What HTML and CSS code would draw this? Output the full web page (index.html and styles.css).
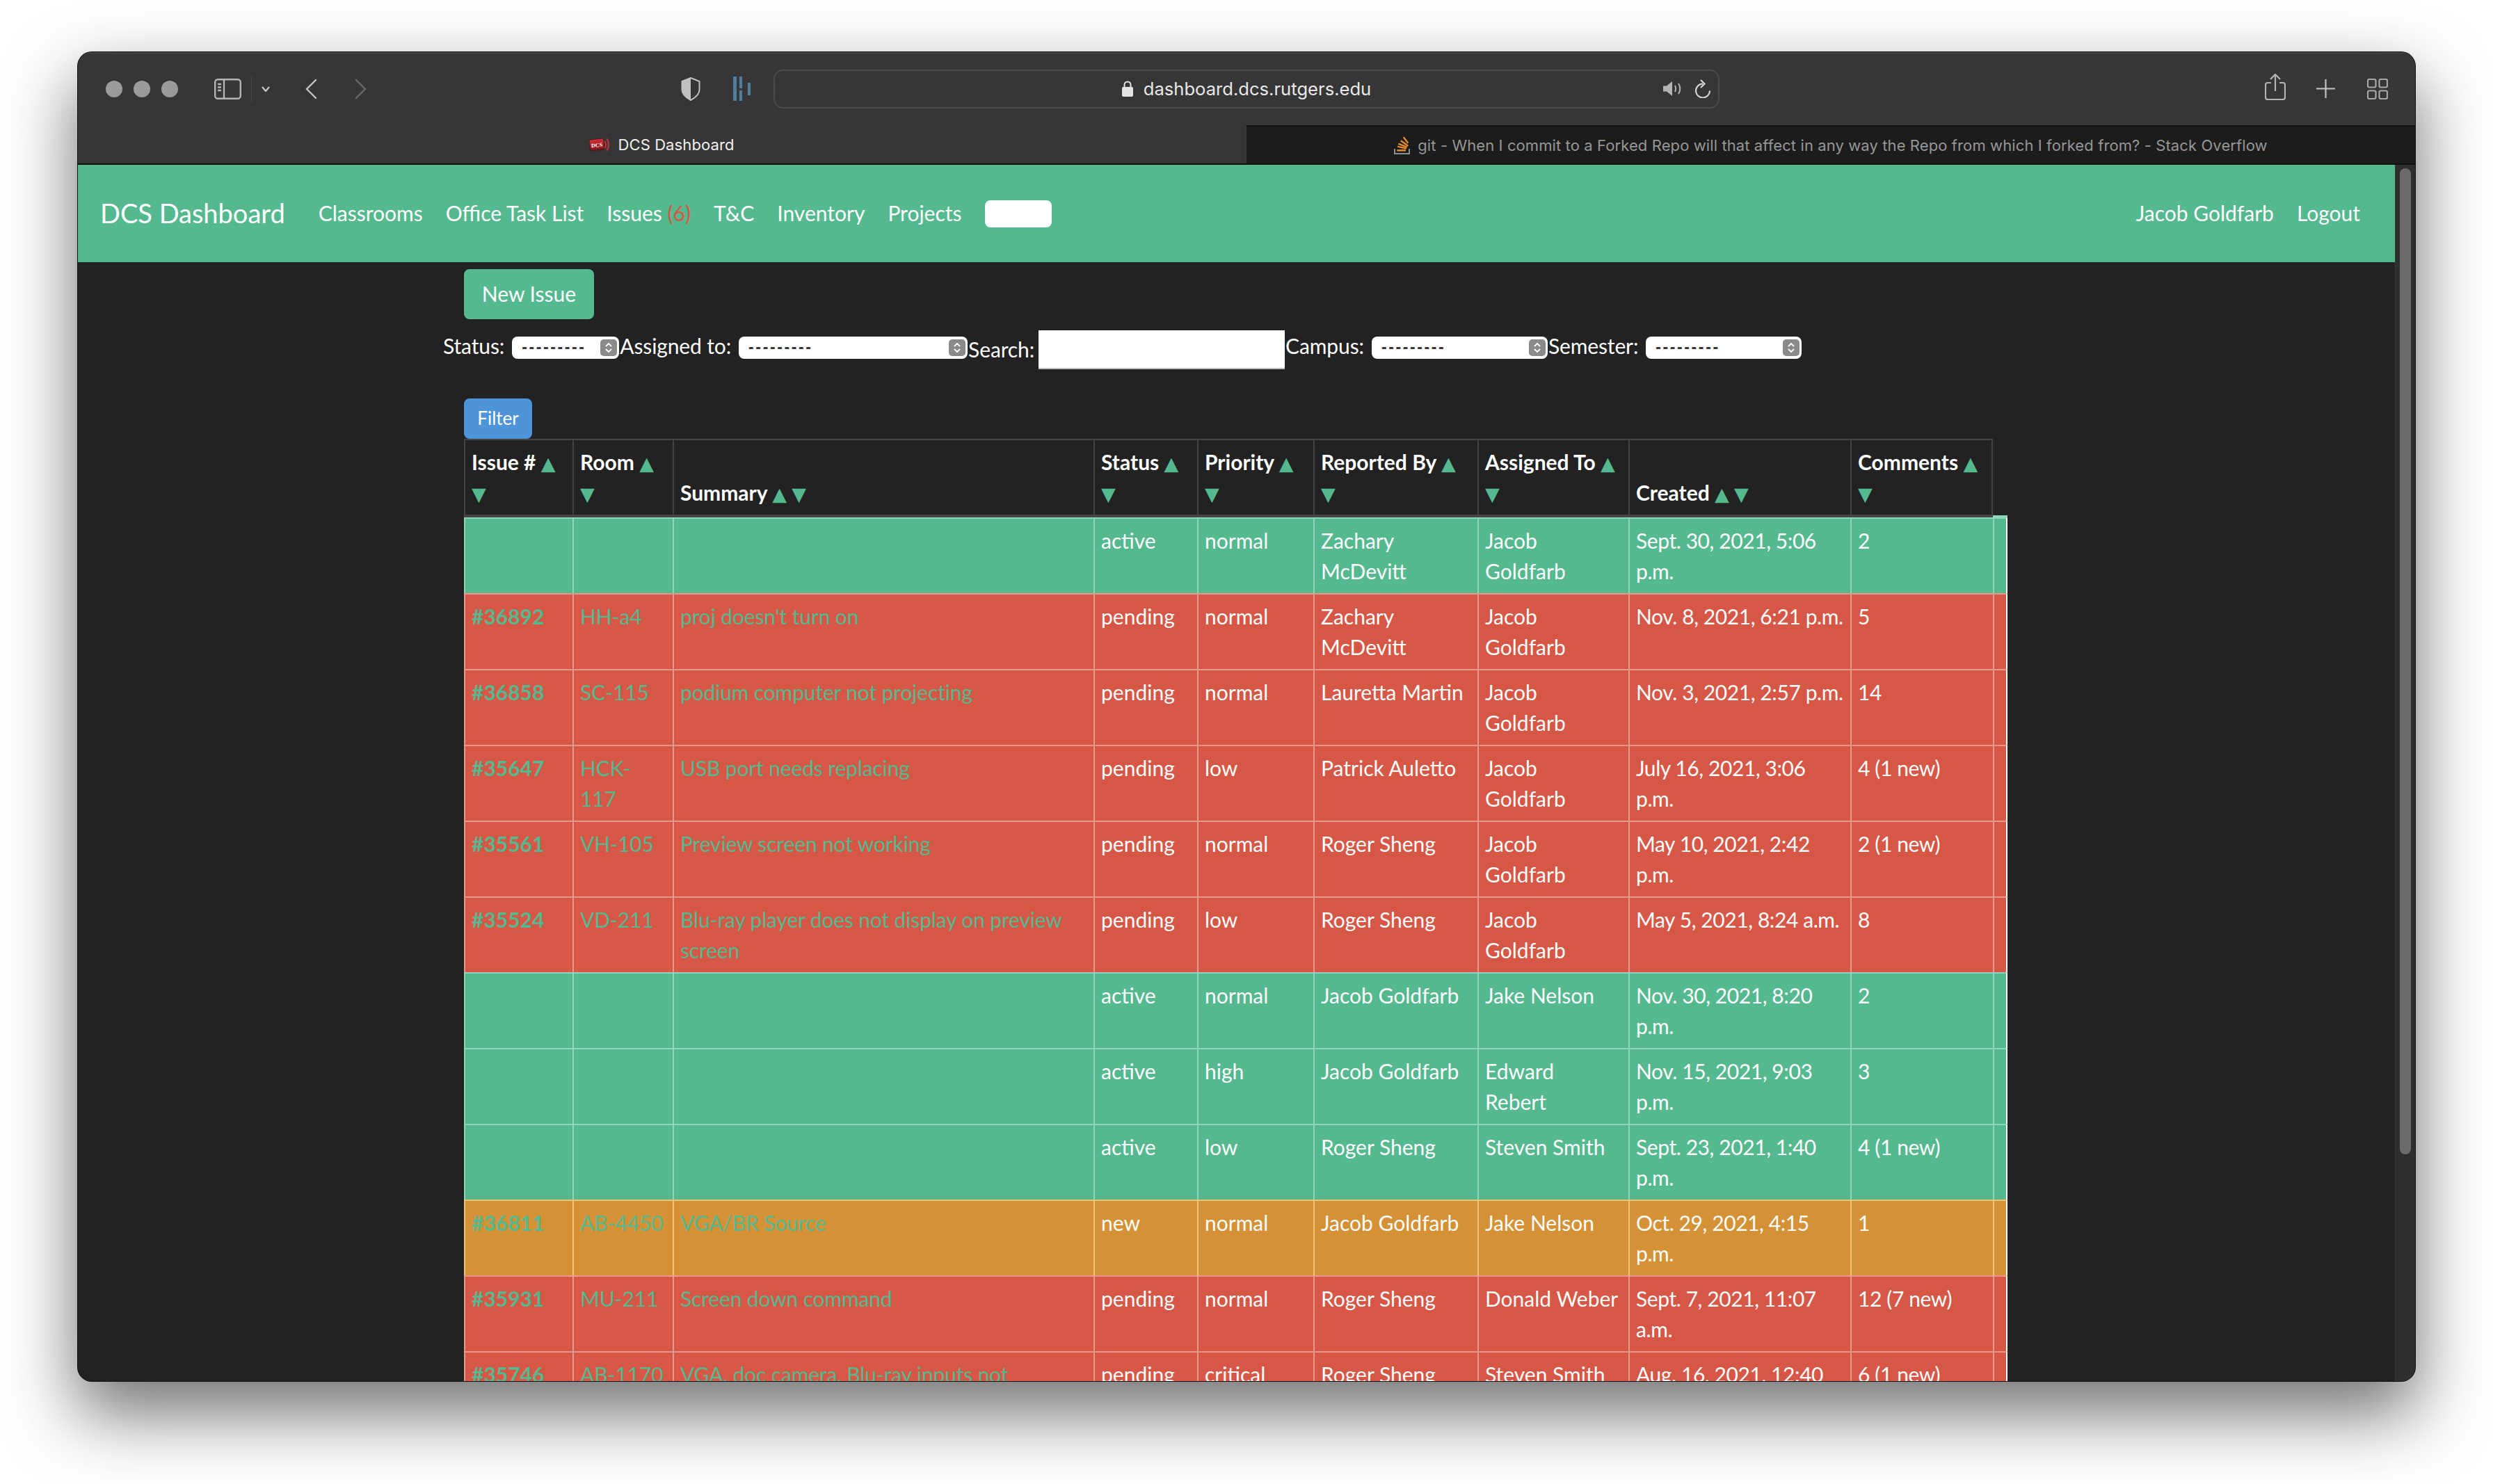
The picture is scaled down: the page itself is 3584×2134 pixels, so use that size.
FILE: index.html
```html
<!DOCTYPE html>
<html>
<head>
    <title>DCS Dashboard</title>
    <meta charset="utf-8">
    <link rel="stylesheet" href="styles.css">
</head>
<body>
<div class="window">

    <div class="toolbar">
        <span class="light"></span><span class="light"></span><span class="light"></span>
        <svg class="ic-sidebar" width="39" height="30" viewBox="0 0 39 30" fill="none" stroke="#b4b4b4" stroke-width="2.4"><rect x="1.2" y="1.2" width="36.6" height="27.6" rx="4"/><path d="M14 1.2V28.8M5 8h5M5 12.5h5M5 17h5" /></svg>
        <span class="tb-divider"></span>
        <svg class="ic-chevron" width="12" height="8" viewBox="0 0 12 8" fill="none" stroke="#c8c8c8" stroke-width="2.2"><path d="M1 1l5 6 5-6"/></svg>
        <svg class="ic-back" width="17" height="30" viewBox="0 0 17 30" fill="none" stroke="#c4c4c4" stroke-width="2.4" stroke-linecap="round"><path d="M15 2L2 15l13 13"/></svg>
        <svg class="ic-forward" width="17" height="30" viewBox="0 0 17 30" fill="none" stroke="#6a6a6a" stroke-width="2.4" stroke-linecap="round"><path d="M2 2l13 13L2 28"/></svg>
        <svg class="ic-shield" width="28" height="34" viewBox="0 0 28 34"><path d="M14 1l12.5 5v12c0 7-6 11.500-12.500 15C7.500 29.500 1.500 25 1.500 18V6z" fill="none" stroke="#c0c0c0" stroke-width="2"/><path d="M14 1L1.500 6v12c0 7 6 11.500 12.500 15z" fill="#c0c0c0"/></svg>
        <svg class="ic-blue" width="25" height="35" viewBox="0 0 25 35" fill="#4f7d9e"><rect x="0" y="0" width="5" height="35"/><rect x="9" y="0" width="4" height="17"/><rect x="9" y="20" width="4" height="15"/><rect x="21" y="9" width="4" height="18"/></svg>

        <div class="url-bar">
            <span></span>
            <div class="url-text">
                <svg width="16" height="23" viewBox="0 0 16 23"><path d="M3.500 10V6a4.500 4.500 0 0 1 9 0v4" fill="none" stroke="#e4e4e4" stroke-width="2"/><rect x="0" y="9" width="16" height="14" rx="2" fill="#e4e4e4"/></svg>
                dashboard.dcs.rutgers.edu
            </div>
            <div class="url-tools">
                <svg width="26" height="21" viewBox="0 0 26 21" fill="none"><path d="M0 6.500h5l8-6.500v21l-8-6.500H0z" fill="#b4b4b4"/><path d="M17 6c1.500 3 1.500 6 0 9M22 3c3 5 3 10 0 15" stroke="#b4b4b4" stroke-width="2"/></svg>
                <svg width="22" height="27" viewBox="0 0 22 27" fill="none" stroke="#d4d4d4" stroke-width="2.200"><path d="M11 6.500a10 10 0 1 0 10 10"/><path d="M8 1l5.500 5.500L8 12"/></svg>
            </div>
        </div>

        <svg class="ic-share" width="30" height="38" viewBox="0 0 30 38" fill="none" stroke="#b4b4b4" stroke-width="2.200"><path d="M9 13H4a3 3 0 0 0-3 3v18a3 3 0 0 0 3 3h22a3 3 0 0 0 3-3V16a3 3 0 0 0-3-3h-5M15 25V2M8 8l7-7 7 7"/></svg>
        <svg class="ic-plus" width="27" height="27" viewBox="0 0 27 27" stroke="#c4c4c4" stroke-width="2.200"><path d="M13.500 0v27M0 13.500h27"/></svg>
        <svg class="ic-grid" width="30" height="30" viewBox="0 0 30 30" fill="none" stroke="#a8a8a8" stroke-width="2.200"><rect x="1" y="1" width="11.500" height="11.500" rx="2"/><rect x="17.500" y="1" width="11.500" height="11.500" rx="2"/><rect x="1" y="17.500" width="11.500" height="11.500" rx="2"/><rect x="17.500" y="17.500" width="11.500" height="11.500" rx="2"/></svg>
    </div>

    <div class="tabs">
        <div class="tab tab-active">
            <svg width="30" height="20" viewBox="0 0 30 20">
                <defs><linearGradient id="favRed" x1="0" y1="0" x2="0" y2="1"><stop offset="0" stop-color="#d8303a"/><stop offset="1" stop-color="#7a1418"/></linearGradient></defs>
                <g transform="rotate(-6 11 10)"><rect x="0.500" y="2" width="21" height="16" rx="2.500" fill="url(#favRed)" stroke="#3a1a1a" stroke-width="0.800"/><text x="11" y="13.500" text-anchor="middle" font-family="Liberation Serif" font-size="8" font-weight="bold" fill="#fff">DCS</text></g>
                <path d="M22.500 5c1.800 3 1.800 7 0 10M25.500 1.500c3.200 5 3.200 12 0 17" fill="none" stroke="#c9343a" stroke-width="2"/>
            </svg>
            DCS Dashboard
        </div>
        <div class="tab tab-inactive">
            <svg width="23" height="26" viewBox="0 0 23 26" fill="none"><path d="M1 18v7h21v-7" stroke="#8a9095" stroke-width="2"/><path d="M4.300 20.300H17M5 14.700l12.700 3M6.300 10.700l12.400 5M9.700 6.300l10.600 7.400M13.700 1.300l6.600 8.400" stroke="#e58a2e" stroke-width="2.400"/></svg>
            git - When I commit to a Forked Repo will that affect in any way the Repo from which I forked from? - Stack Overflow
        </div>
    </div>

    <div class="viewport">
        <div class="page">

            <div class="navbar">
                <a class="brand">DCS Dashboard</a>
                <a class="nav-link">Classrooms</a>
                <a class="nav-link">Office Task List</a>
                <a class="nav-link">Issues <span class="count">(6)</span></a>
                <a class="nav-link">T&amp;C</a>
                <a class="nav-link">Inventory</a>
                <a class="nav-link">Projects</a>
                <input class="nav-search" type="text">
                <a class="nav-link nav-user">Jacob Goldfarb</a>
                <a class="nav-link">Logout</a>
            </div>

            <div class="content">
                <a class="btn btn-new">New Issue</a>

                <div class="filters">
                    <span class="flabel">Status:</span>
                    <span class="sel sel-status">---------<i class="sel-arrows"><svg width="12" height="18" viewBox="0 0 12 18" fill="none" stroke="#fff" stroke-width="1.800"><path d="M2 7l4-4 4 4M2 11l4 4 4-4"/></svg></i></span>
                    <span class="flabel">Assigned to:</span>
                    <span class="sel sel-assigned">---------<i class="sel-arrows"><svg width="12" height="18" viewBox="0 0 12 18" fill="none" stroke="#fff" stroke-width="1.800"><path d="M2 7l4-4 4 4M2 11l4 4 4-4"/></svg></i></span>
                    <span class="flabel flabel-search">Search:</span>
                    <input class="search" type="text">
                    <span class="flabel">Campus:</span>
                    <span class="sel sel-campus">---------<i class="sel-arrows"><svg width="12" height="18" viewBox="0 0 12 18" fill="none" stroke="#fff" stroke-width="1.800"><path d="M2 7l4-4 4 4M2 11l4 4 4-4"/></svg></i></span>
                    <span class="flabel">Semester:</span>
                    <span class="sel sel-semester">---------<i class="sel-arrows"><svg width="12" height="18" viewBox="0 0 12 18" fill="none" stroke="#fff" stroke-width="1.800"><path d="M2 7l4-4 4 4M2 11l4 4 4-4"/></svg></i></span>
                </div>

                <a class="btn btn-filter">Filter</a>

                <table class="issues">
                    <colgroup>
                        <col class="c-issue"><col class="c-room"><col class="c-summary"><col class="c-status"><col class="c-priority"><col class="c-reported"><col class="c-assigned"><col class="c-created"><col class="c-comments"><col class="c-extra">
                    </colgroup>
                    <thead>
                        <tr>
                            <th>Issue # <span class="sort">▲</span> <span class="sort">▼</span></th>
                            <th>Room <span class="sort">▲</span> <span class="sort">▼</span></th>
                            <th>Summary <span class="sort">▲</span> <span class="sort">▼</span></th>
                            <th>Status <span class="sort">▲</span> <span class="sort">▼</span></th>
                            <th>Priority <span class="sort">▲</span> <span class="sort">▼</span></th>
                            <th>Reported By <span class="sort">▲</span> <span class="sort">▼</span></th>
                            <th>Assigned To <span class="sort">▲</span> <span class="sort">▼</span></th>
                            <th>Created <span class="sort">▲</span> <span class="sort">▼</span></th>
                            <th class="th-last">Comments <span class="sort">▲</span> <span class="sort">▼</span></th>
                        </tr>
                    </thead>
                    <tbody>
                        <tr class="active first">
                            <td></td><td></td><td></td>
                            <td>active</td><td>normal</td><td>Zachary McDevitt</td><td>Jacob Goldfarb</td><td>Sept. 30, 2021, 5:06 p.m.</td><td>2</td><td></td>
                        </tr>
                        <tr class="pending">
                            <td class="num">#36892</td><td class="lnk">HH-a4</td><td class="lnk">proj doesn't turn on</td>
                            <td>pending</td><td>normal</td><td>Zachary McDevitt</td><td>Jacob Goldfarb</td><td>Nov. 8, 2021, 6:21 p.m.</td><td>5</td><td></td>
                        </tr>
                        <tr class="pending">
                            <td class="num">#36858</td><td class="lnk">SC-115</td><td class="lnk">podium computer not projecting</td>
                            <td>pending</td><td>normal</td><td>Lauretta Martin</td><td>Jacob Goldfarb</td><td>Nov. 3, 2021, 2:57 p.m.</td><td>14</td><td></td>
                        </tr>
                        <tr class="pending">
                            <td class="num">#35647</td><td class="lnk">HCK-117</td><td class="lnk">USB port needs replacing</td>
                            <td>pending</td><td>low</td><td>Patrick Auletto</td><td>Jacob Goldfarb</td><td>July 16, 2021, 3:06 p.m.</td><td>4 (1 new)</td><td></td>
                        </tr>
                        <tr class="pending">
                            <td class="num">#35561</td><td class="lnk">VH-105</td><td class="lnk">Preview screen not working</td>
                            <td>pending</td><td>normal</td><td>Roger Sheng</td><td>Jacob Goldfarb</td><td>May 10, 2021, 2:42 p.m.</td><td>2 (1 new)</td><td></td>
                        </tr>
                        <tr class="pending">
                            <td class="num">#35524</td><td class="lnk">VD-211</td><td class="lnk">Blu-ray player does not display on preview screen</td>
                            <td>pending</td><td>low</td><td>Roger Sheng</td><td>Jacob Goldfarb</td><td>May 5, 2021, 8:24 a.m.</td><td>8</td><td></td>
                        </tr>
                        <tr class="active">
                            <td></td><td></td><td></td>
                            <td>active</td><td>normal</td><td>Jacob Goldfarb</td><td>Jake Nelson</td><td>Nov. 30, 2021, 8:20 p.m.</td><td>2</td><td></td>
                        </tr>
                        <tr class="active">
                            <td></td><td></td><td></td>
                            <td>active</td><td>high</td><td>Jacob Goldfarb</td><td>Edward Rebert</td><td>Nov. 15, 2021, 9:03 p.m.</td><td>3</td><td></td>
                        </tr>
                        <tr class="active">
                            <td></td><td></td><td></td>
                            <td>active</td><td>low</td><td>Roger Sheng</td><td>Steven Smith</td><td>Sept. 23, 2021, 1:40 p.m.</td><td>4 (1 new)</td><td></td>
                        </tr>
                        <tr class="new">
                            <td class="num">#36811</td><td class="lnk">AB-4450</td><td class="lnk">VGA/BR Source</td>
                            <td>new</td><td>normal</td><td>Jacob Goldfarb</td><td>Jake Nelson</td><td>Oct. 29, 2021, 4:15 p.m.</td><td>1</td><td></td>
                        </tr>
                        <tr class="pending">
                            <td class="num">#35931</td><td class="lnk">MU-211</td><td class="lnk">Screen down command</td>
                            <td>pending</td><td>normal</td><td>Roger Sheng</td><td>Donald Weber</td><td>Sept. 7, 2021, 11:07 a.m.</td><td>12 (7 new)</td><td></td>
                        </tr>
                        <tr class="pending">
                            <td class="num">#35746</td><td class="lnk">AB-1170</td><td class="lnk">VGA, doc camera, Blu-ray inputs not working</td>
                            <td>pending</td><td>critical</td><td>Roger Sheng</td><td>Steven Smith</td><td>Aug. 16, 2021, 12:40 p.m.</td><td>6 (1 new)</td><td></td>
                        </tr>
                    </tbody>
                </table>
            </div>
        </div>

        <div class="scrollbar"><div class="thumb"></div></div>
    </div>
</div>
</body>
</html>
```

FILE: styles.css
```css
html, body {
    margin: 0;
    height: 2134px;
    overflow: hidden;
}

body {
    background-color: #fff;
    padding: 75px 112px 148px 112px;
    box-sizing: border-box;
    font-family: Lato, "Open Sans", sans-serif;
}

a {
    text-decoration: none;
}

/* browser window */
.window {
    height: 1911px;
    border-radius: 20px;
    overflow: hidden;
    display: flex;
    flex-direction: column;
    background-color: #222;
    box-shadow: 0 0 0 1px #111, 0 44px 100px 4px rgba(0, 0, 0, 0.55);
}

.toolbar {
    flex: 0 0 105px;
    display: flex;
    align-items: center;
    padding-left: 40px;
    padding-bottom: 2px;
    background-color: #363636;
    border-top: 2px solid #444;
    box-sizing: border-box;
}

.light {
    width: 24px;
    height: 24px;
    border-radius: 50%;
    background-color: #9a9a9a;
    margin-right: 16px;
}

.ic-sidebar { margin-left: 36px; }
.tb-divider { width: 1px; height: 36px; background-color: #4a4a4a; margin-left: 14px; }
.ic-chevron { margin-left: 14px; }
.ic-back { margin-left: 51px; }
.ic-forward { margin-left: 54px; }
.ic-shield { margin-left: 452px; }
.ic-blue { margin-left: 47px; }

.url-bar {
    width: 1360px;
    height: 56px;
    margin-left: 33px;
    box-sizing: border-box;
    border: 2px solid #4a4a4a;
    border-radius: 14px;
    display: grid;
    grid-template-columns: 1fr auto 1fr;
    align-items: center;
}

.url-text {
    display: flex;
    align-items: center;
    gap: 15px;
    color: #e8e8e8;
    font-family: Inter, sans-serif;
    font-size: 25.6px;
}

.url-tools {
    display: flex;
    align-items: center;
    justify-content: flex-end;
    gap: 20px;
    padding-right: 11px;
}

.ic-share { margin-left: 784px; margin-top: -5px; }
.ic-plus { margin-left: 44px; }
.ic-grid { margin-left: 46px; }

.tabs {
    flex: 0 0 57px;
    display: flex;
    font-family: Inter, sans-serif;
    font-size: 22px;
    letter-spacing: 0.1px;
    box-sizing: border-box;
    border-bottom: 2px solid #111;
}

.tab {
    display: flex;
    align-items: center;
    justify-content: center;
    gap: 11px;
}

.tab-active {
    flex: 0 0 1679px;
    background-color: #363636;
    color: #f0f0f0;
}

.tab-inactive {
    flex: 1;
    background-color: #1c1c1c;
    color: #969696;
    border-top: 2px solid #111;
    border-left: 1px solid #3a3a3a;
}

/* page in the window */
.viewport {
    flex: 1;
    display: flex;
    min-height: 0;
}

.page {
    flex: 1;
    overflow: hidden;
    color: #fff;
    font-size: 30px;
    line-height: 43.5px;
}

.scrollbar {
    flex: 0 0 29px;
    background-color: #2e2e2e;
    border-left: 1px solid #3a3a3a;
    box-sizing: border-box;
    padding: 5px 6px 0 6px;
}

.thumb {
    height: 1418px;
    border-radius: 8px;
    background-color: #6b6b6b;
}

.navbar {
    height: 140px;
    display: flex;
    align-items: center;
    gap: 33px;
    padding: 0 50px 0 32px;
    box-sizing: border-box;
    background-color: #55b98f;
}

.brand {
    color: #fff;
    font-size: 38px;
    margin-right: 15px;
}

.nav-link {
    color: #fff;
}

.count {
    color: #d75746;
}

.nav-search {
    width: 96px;
    height: 39px;
    padding: 0;
    border: 0;
    border-radius: 8px;
    background-color: #fff;
}

.nav-user {
    margin-left: auto;
}

.content {
    padding: 10px 0 0 555px;
}

.btn {
    display: block;
    color: #fff;
    box-sizing: border-box;
    border-radius: 8px;
    text-align: center;
}

.btn-new {
    width: 187px;
    height: 72px;
    line-height: 70px;
    background-color: #55b98f;
}

.filters {
    display: flex;
    align-items: flex-start;
    height: 56px;
    margin: 16px 0 0 -30px;
}

.flabel {
    margin-top: 1px;
    margin-right: 11px;
    letter-spacing: -0.12px;
    white-space: nowrap;
}

.flabel-search {
    margin-top: 6px;
    margin-right: 6px;
}

.sel {
    flex: none;
    height: 32px;
    margin-top: 9px;
    margin-right: 1px;
    box-sizing: border-box;
    padding: 0 3px 0 14px;
    display: flex;
    align-items: center;
    justify-content: space-between;
    background-color: #fff;
    border-radius: 8px;
    color: #333;
    font-family: "Liberation Sans", sans-serif;
    font-size: 23px;
    font-weight: bold;
    letter-spacing: 2.6px;
}

.sel-status { width: 154px; }
.sel-assigned { width: 329px; }
.sel-campus { width: 253px; }
.sel-semester { width: 224px; }

.sel-arrows {
    width: 24px;
    height: 24px;
    border-radius: 5px;
    background-color: #8a8a8a;
    display: flex;
    align-items: center;
    justify-content: center;
}

.search {
    flex: none;
    width: 354px;
    height: 56px;
    padding: 0;
    margin: 0 1px 0 0;
    box-sizing: border-box;
    border: 0;
    border-bottom: 2px solid #bbb;
    background-color: #fff;
}

.btn-filter {
    width: 98px;
    height: 58px;
    margin-top: 42px;
    line-height: 56px;
    font-size: 26px;
    background-color: #4e94d8;
}

/* issue table */
.issues {
    width: 2219px;
    table-layout: fixed;
    border-collapse: separate;
    border-spacing: 0;
}

.c-issue { width: 156px; }
.c-room { width: 144px; }
.c-summary { width: 605px; }
.c-status { width: 149px; }
.c-priority { width: 167px; }
.c-reported { width: 236px; }
.c-assigned { width: 217px; }
.c-created { width: 319px; }
.c-comments { width: 205px; }
.c-extra { width: 21px; }

.issues th, .issues td {
    padding: 10px 12px 10px 9px;
    text-align: left;
    vertical-align: top;
}

.issues th {
    padding-right: 6px;
    vertical-align: bottom;
    font-weight: bold;
    border-top: 2px solid #444;
    border-left: 2px solid #444;
    border-bottom: 4px solid #444;
}

.issues .th-last {
    border-right: 2px solid #444;
}

.sort {
    color: #55b98f;
    font-family: "DejaVu Sans", sans-serif;
    font-size: 27px;
    font-weight: normal;
    line-height: 0;
}

.issues td {
    border-top: 2px solid;
    border-left: 2px solid;
}

.issues td:nth-child(8) {
    padding-right: 8px;
    letter-spacing: -0.42px;
}

.issues td:nth-child(9) {
    letter-spacing: -0.4px;
}

.issues td:last-child {
    border-right: 2px solid;
    padding: 0;
}

.first td:last-child {
    box-shadow: 0 -3px 0 #8ed5bb;
}

.active td { background-color: #55b98f; border-color: #8ed5bb; }
.pending td { background-color: #d75746; border-color: #e8978c; }
.new td { background-color: #d49135; border-color: #f0c272; }

.issues .lnk { color: #55b98f; letter-spacing: -0.15px; }
.issues .num { color: #55b98f; font-weight: bold; }
```
